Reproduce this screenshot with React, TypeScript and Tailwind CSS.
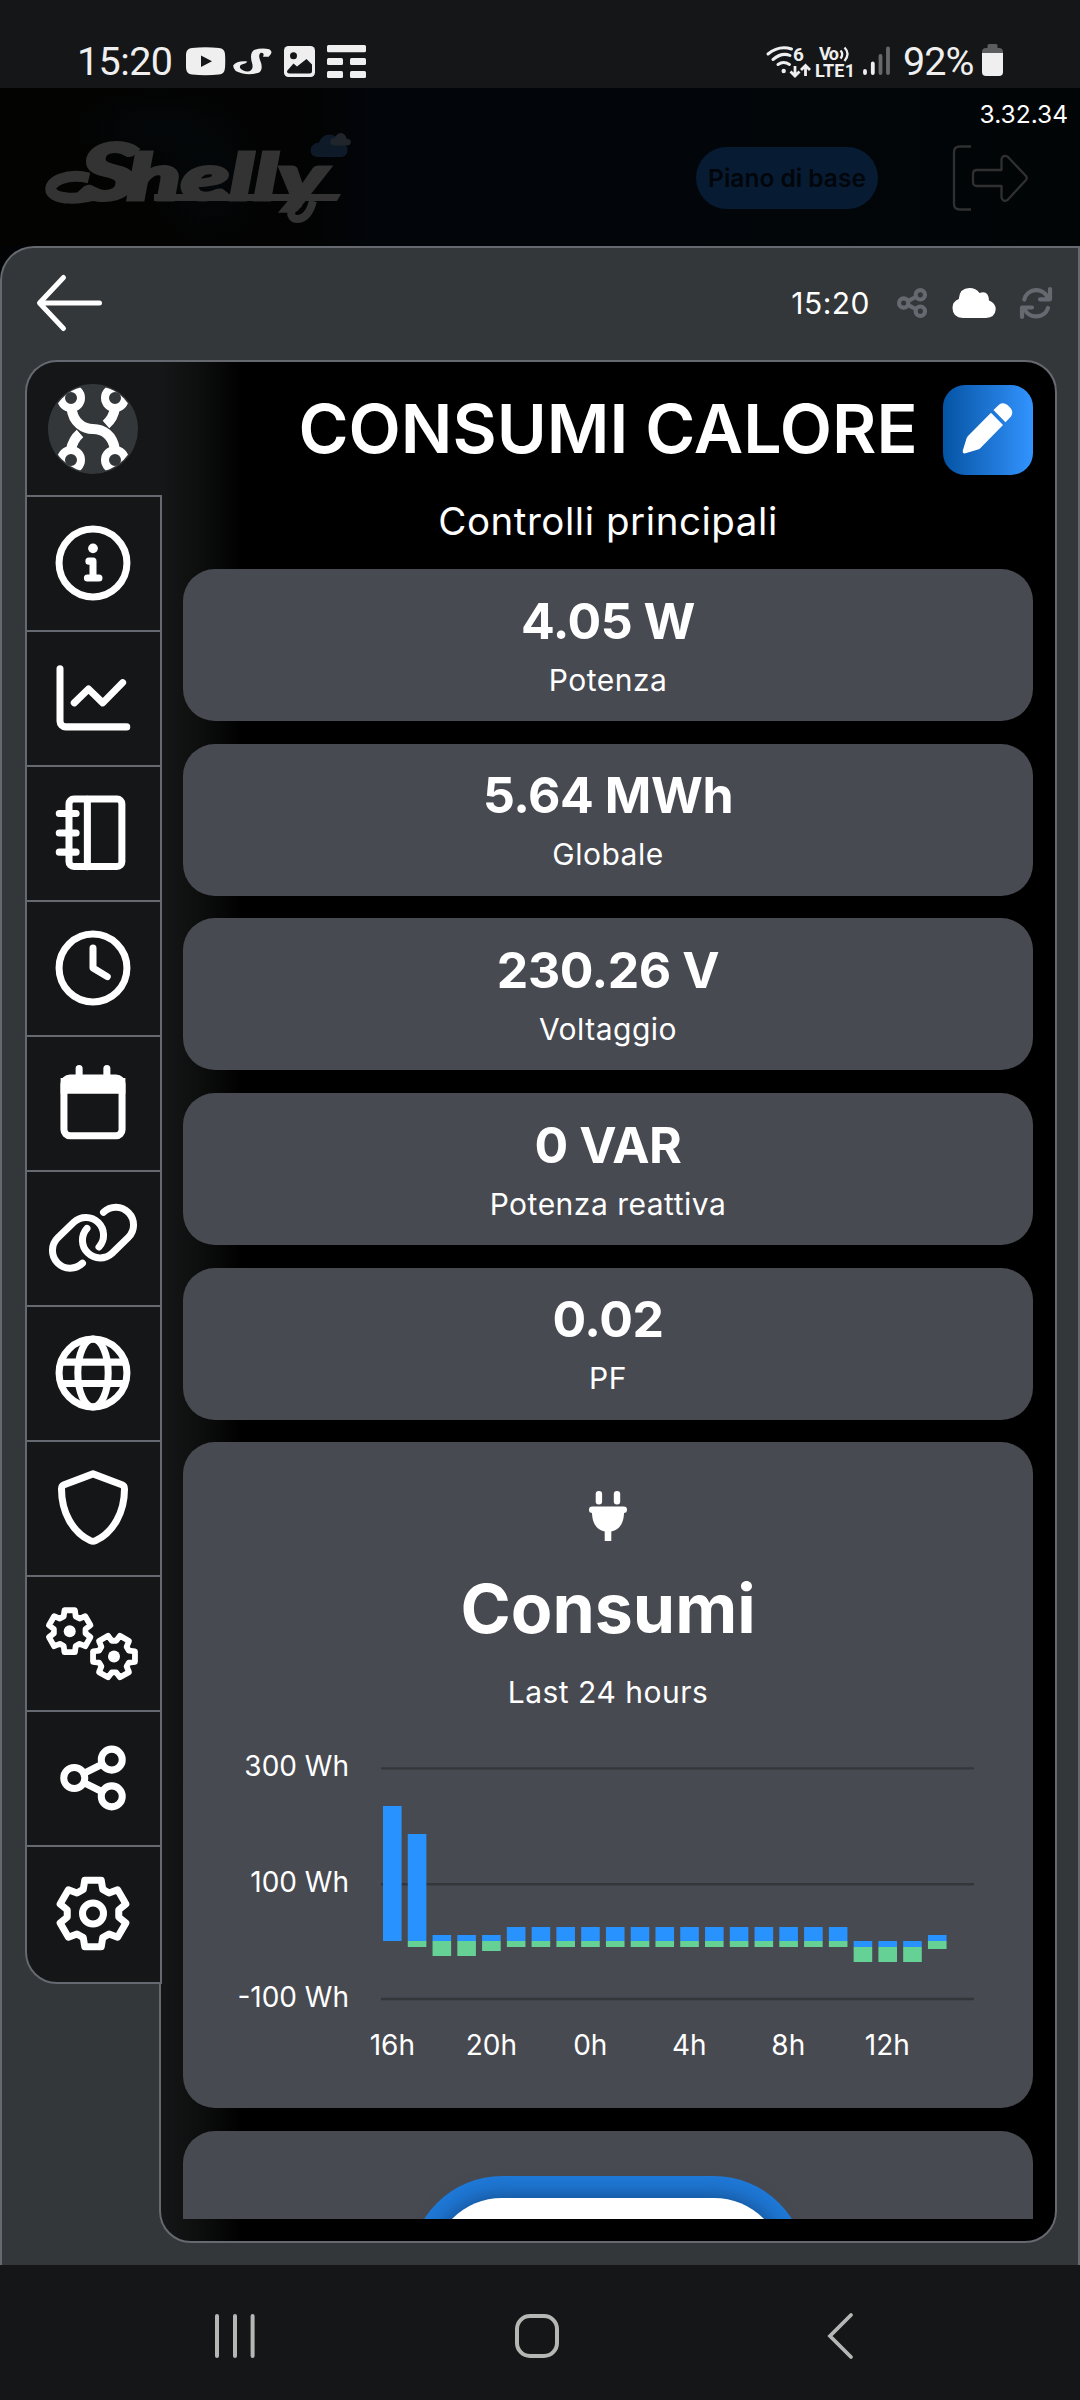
import React from "react";

const ink = "#eeefee";

function gearPath(cx: number, cy: number, outer: number, inner: number, turn = 0) {
  const points: string[] = [];
  for (let i = 0; i < 6; i++) {
    const mid = i * 60 - 90 + turn;
    const corners: [number, number][] = [
      [inner, -22],
      [outer, -14],
      [outer, 14],
      [inner, 22],
    ];
    for (const [r, d] of corners) {
      const a = ((mid + d) * Math.PI) / 180;
      points.push(`${(cx + r * Math.cos(a)).toFixed(2)} ${(cy + r * Math.sin(a)).toFixed(2)}`);
    }
  }
  return `M${points.join("L")}Z`;
}

function Icon({ children, className = "size-[90px]" }: { children: React.ReactNode; className?: string }) {
  return (
    <svg
      viewBox="0 0 24 24"
      className={className}
      fill="none"
      stroke="currentColor"
      strokeWidth={1.87}
      strokeLinecap="round"
      strokeLinejoin="round"
    >
      {children}
    </svg>
  );
}

function ShareShapes() {
  return (
    <>
      <circle cx="7" cy="12" r="2.8" />
      <circle cx="17" cy="7.1" r="2.8" />
      <circle cx="17" cy="16.9" r="2.8" />
      <path d="M9.7 10.7L14.3 8.4M9.7 13.3l4.6 2.3" />
    </>
  );
}

const sidebarIcons: { name: string; icon: React.ReactNode }[] = [
  {
    name: "info",
    icon: (
      <Icon>
        <circle cx="12" cy="12" r="9.05" />
        <circle cx="12" cy="8.1" r="1.3" fill="currentColor" stroke="none" />
        <path d="M10.9 11.5H12V16M10.5 16H13.6" />
      </Icon>
    ),
  },
  {
    name: "chart",
    icon: (
      <Icon>
        <path d="M3.2 4.2V18.2a1.5 1.5 0 0 0 1.5 1.5H21" />
        <path d="M7 13.3L10.8 9.6 14.6 13.3 19.9 7.9" />
      </Icon>
    ),
  },
  {
    name: "notebook",
    icon: (
      <Icon>
        <rect x="5.6" y="2.95" width="14.1" height="18" rx="1.3" />
        <path d="M10.5 3V21M3 6.8H7.5M3 12H7.5M3 17.1H7.5" />
      </Icon>
    ),
  },
  {
    name: "clock",
    icon: (
      <Icon>
        <circle cx="12" cy="12" r="9.05" />
        <path d="M12 6.7V12L15.8 14.3" />
      </Icon>
    ),
  },
  {
    name: "calendar",
    icon: (
      <Icon>
        <path d="M8.3 2.8V6M15.7 2.8V6" />
        <rect x="4.25" y="5.35" width="15.5" height="15.4" rx="1.6" />
        <path d="M4.3 6.3H19.7V8.6H4.3Z" fill="currentColor" strokeLinejoin="miter" />
      </Icon>
    ),
  },
  {
    name: "link",
    icon: (
      <Icon>
        <path d="M13.6 14.4A4.71 4.71 0 0 0 6.88 7.81L2.61 11.95A4.71 4.71 0 0 0 9.2 18.7" />
        <path d="M10.4 9.44A4.71 4.71 0 0 0 17.12 16.03L21.39 11.89A4.71 4.71 0 0 0 14.8 5.14" />
      </Icon>
    ),
  },
  {
    name: "globe",
    icon: (
      <Icon>
        <circle cx="12" cy="12" r="9.05" />
        <ellipse cx="12" cy="12" rx="4.05" ry="9.05" />
        <path d="M3.8 9.1H20.2M3.8 14.8H20.2" />
      </Icon>
    ),
  },
  {
    name: "shield",
    icon: (
      <Icon>
        <path d="M12 2.9L19.7 5.8Q20.4 6.1 20.4 6.9C20.4 13 17.5 18.5 12.7 20.7Q12 21 11.3 20.7C6.5 18.5 3.6 13 3.6 6.9Q3.6 6.1 4.3 5.8Z" />
      </Icon>
    ),
  },
  {
    name: "gears",
    icon: (
      <svg viewBox="0 0 96 96" className="size-[96px]" fill="none" stroke="currentColor" strokeWidth={5.8} strokeLinejoin="round">
        <path d={gearPath(24.7, 36.2, 21.6, 16)} />
        <circle cx="24.7" cy="36.2" r="6" fill="currentColor" stroke="none" />
        <path d={gearPath(69, 61.6, 21.6, 16, 30)} />
        <circle cx="69" cy="61.6" r="6" fill="currentColor" stroke="none" />
      </svg>
    ),
  },
  {
    name: "share",
    icon: (
      <Icon>
        <ShareShapes />
      </Icon>
    ),
  },
  {
    name: "settings",
    icon: (
      <svg viewBox="0 0 90 90" className="size-[90px]" fill="none" stroke="currentColor" strokeWidth={7} strokeLinejoin="round">
        <path d={gearPath(45, 44.5, 34.2, 26)} />
        <circle cx="45" cy="44.5" r="10.5" />
      </svg>
    ),
  },
];

const readings = [
  { value: "4.05 W", label: "Potenza" },
  { value: "5.64 MWh", label: "Globale" },
  { value: "230.26 V", label: "Voltaggio" },
  { value: "0 VAR", label: "Potenza reattiva" },
  { value: "0.02", label: "PF" },
];

// Each bar: [top of blue, blue/green boundary, bottom of green]
const steady: [number, number, number] = [1927, 1941, 1947];
const offset: [number, number, number] = [1941, 1947, 1962];
const bars: [number, number, number][] = [
  [1806, 1941, 1941],
  [1834, 1941, 1947],
  [1935, 1941, 1956],
  [1935, 1941, 1956],
  [1935, 1941, 1951],
  ...Array.from({ length: 14 }, () => steady),
  offset,
  offset,
  offset,
  [1935, 1941, 1949],
];

function StatusBar() {
  return (
    <div className="flex h-[88px] items-center justify-between bg-[#151618] pt-[40px] pb-[4px] pr-[76px] pl-[77px] font-['Roboto',sans-serif] text-[#eeefee]">
      <div className="flex h-[44px] items-center">
        <span className="w-[109px] text-[39.5px] leading-[40px] tracking-[-0.6px]">15:20</span>
        <svg viewBox="186 40 182 44" className="h-[44px] w-[182px]" fill={ink}>
          <path d="M192 48Q205.500 46.500 219 48Q224.500 48.500 225 54Q225.500 61 225 68Q224.500 74 219 74.500Q205.500 76 192 74.500Q186.500 74 186 68Q185.500 61 186 54Q186.500 48.500 192 48Z" />
          <path d="M201 55.500L212 61.300L201 67Z" fill="#151618" />
          <path d="M268.700 56.700H263Q265 52.300 260.700 52.700Q258 54.700 260 60Q264 69.300 258.700 72.700Q250 75.300 241.700 73.300Q232.700 71.300 233.300 65.300Q236.700 60.700 246 61.300L247.300 61.700Q246 63.700 243.300 64Q239.300 64.700 240 68Q243.300 72 249.300 71.300Q254 69.300 252 62.700Q249.300 53.300 254 50Q261.700 47.500 269.300 49.300Q274 52 268.700 56.700Z" />
          <rect x="284" y="46" width="31" height="31" rx="4.500" />
          <circle cx="293.500" cy="55.800" r="3.500" fill="#151618" />
          <path d="M287 71L293.500 63.500L297 66.500L306.500 59L312 64.500V71Q312 73.500 309.500 73.500H289.500Q287 73.500 287 71Z" fill="#151618" />
          <rect x="327" y="45" width="39" height="7.300" rx="1.500" />
          <rect x="327" y="58" width="16" height="7" rx="1.500" />
          <rect x="350" y="58" width="16" height="7" rx="1.500" />
          <rect x="327" y="71" width="16" height="7" rx="1.500" />
          <rect x="350" y="71" width="16" height="7" rx="1.500" />
        </svg>
      </div>
      <div className="flex h-[44px] items-center">
        <svg viewBox="764 40 138 44" className="h-[44px] w-[138px]" fill="none" stroke={ink}>
          <g strokeWidth="3" strokeLinecap="round">
            <path d="M767 54Q778 45 790.500 49" />
            <path d="M772 59.500Q781 52 789 55.500" />
            <path d="M777 64.500Q782.500 60.500 788.500 64.500" />
          </g>
          <circle cx="782.700" cy="71" r="2.200" fill={ink} stroke="none" />
          <path d="M794 66V75M789.500 71.500L794 76L798.500 71.500M804.500 76V66M800 70L804.500 65.500L809 70" strokeWidth="2.800" />
          <g fill={ink} stroke="none" fontFamily="Roboto, sans-serif" fontWeight="700">
            <text x="792" y="60.500" fontSize="19">6</text>
            <text x="818" y="60" fontSize="18" textLength="20">Vo</text>
            <text x="814" y="77" fontSize="18" textLength="40">LTE1</text>
          </g>
          <path d="M839.500 50.500Q843 54 839.500 58.500M843.500 47.500Q849.500 53.500 843.500 61" strokeWidth="2.300" />
          <g strokeWidth="3.800" strokeLinecap="round">
            <path d="M864 71V73M871.800 63.500V73" />
            <path d="M879.500 56V73M887 48.500V73" stroke="#67686a" />
          </g>
        </svg>
        <span className="w-[79px] text-[39.500px] leading-[40px] tracking-[-1px]">92%</span>
        <svg viewBox="982 40 22 44" className="h-[44px] w-[22px]">
          <path d="M989 44H996Q997.500 44 997.500 45.500V48H999Q1003 48 1003 52V55H982V52Q982 48 986 48H987.500V45.500Q987.500 44 989 44Z" fill="#5c5d5e" />
          <path d="M982 53H1003V72Q1003 76 999 76H986Q982 76 982 72Z" fill={ink} />
        </svg>
      </div>
    </div>
  );
}

function AppHeader() {
  return (
    <div className="relative h-[158px] bg-[radial-gradient(ellipse_60px_70px_at_210px_90px,#04080b,transparent),radial-gradient(ellipse_90px_40px_at_160px_40px,#04070a,transparent),linear-gradient(90deg,#030302_0px,#020302_300px,#02050a_380px,#020609_800px,#020506_1080px)]">
      <div className="absolute top-[12px] right-[12px] text-[24.500px] leading-[28px] text-white">3.32.34</div>
      <div className="flex h-full items-center justify-between pr-[50px] pl-[40px]">
        <svg viewBox="40 125 320 105" className="mt-[21px] h-[105px] w-[320px] overflow-visible">
          <path
            d="M89 178C68 173 48 181 51 191C56 200 78 200 98 194"
            fill="none"
            stroke="#333333"
            strokeWidth="11"
          />
          <g fill="#333333" stroke="#333333" strokeWidth="3" fontFamily="Lato, sans-serif" fontStyle="italic" fontWeight="900">
            <text x="80" y="199.500" fontSize="78" textLength="58" lengthAdjust="spacingAndGlyphs">
              S
            </text>
            <text x="127" y="199.500" fontSize="64" textLength="200" lengthAdjust="spacingAndGlyphs">
              helly
            </text>
          </g>
          <path d="M154 194H341L337 201H154Z" fill="#333333" />
          <path d="M313 201C309 216 303 219 297 219C289 219 288 206 301 203" fill="none" stroke="#333333" strokeWidth="8" />
          <path d="M317 157Q310.500 156 310.500 150Q311 143.500 319 142.500Q322 134.500 329.500 134.500Q338 135 340 142.500Q348 144 347.500 150.500Q347 157 341 157Z" fill="#0e1a28" />
          <path d="M334 145.500Q330 145 330 141.500Q330.500 138 335 137.500Q337 133 341 133Q345.500 133.500 346.500 138.500Q351 139 351 142Q350.500 145.500 347 145.500Z" fill="#20242b" />
        </svg>
        <div className="mt-[22px] flex items-center">
          <div className="flex h-[62px] w-[182px] items-center justify-center rounded-full bg-[#071b33] text-[24.500px] font-semibold whitespace-nowrap text-[#02060b]">
            Piano di base
          </div>
          <svg viewBox="951 143 79 68" className="ml-[73px] h-[68px] w-[79px]" fill="none" stroke="#303030" strokeWidth="2.300" strokeLinejoin="round">
            <path d="M971 145.500H960Q954 145.500 954 151V203Q954 208.500 960 208.500H971" />
            <path d="M977 169H1001.500V158Q1003 153.500 1007.500 155.500L1026 175Q1027.500 177 1026 179L1007.500 199Q1003 201.500 1001.500 196.500V185H977Q973 185 973 181V173Q973 169 977 169Z" />
          </svg>
        </div>
      </div>
    </div>
  );
}

function ModalBar() {
  return (
    <div className="flex h-[112px] items-center justify-between pr-[24px] pb-[2px] pl-[34px] text-white">
      <svg viewBox="36 273 68 60" className="h-[60px] w-[68px]" fill="none" stroke="currentColor" strokeWidth="5" strokeLinecap="round" strokeLinejoin="round">
        <path d="M63.500 277.500L39.500 303L63.500 328.500M40 303H99.500" />
      </svg>
      <div className="flex items-center">
        <span className="text-[30px] leading-[40px] tracking-[0.500px]">15:20</span>
        <Icon className="ml-[22px] size-[40px] stroke-[2.500] text-[#666970]">
          <ShareShapes />
        </Icon>
        <svg viewBox="952 287 45 32" className="ml-[20px] h-[32px] w-[45px]" fill="currentColor">
          <path d="M963 318Q952.500 317.500 952.500 308Q952.500 301.500 958.800 299Q959.500 288 969.500 288Q976 288 979.500 293Q988.500 290 989 300.500Q995.700 303 995.700 309.500Q995 317.500 986 318Z" />
        </svg>
        <svg
          viewBox="1018 285 36 36"
          className="ml-[21px] size-[36px] text-[#666970]"
          fill="none"
          stroke="currentColor"
          strokeWidth="4.200"
          strokeLinecap="round"
          strokeLinejoin="round"
        >
          <path d="M1050 289V299.300H1040M1022 317V307.500H1032" />
          <path d="M1024.300 299.500C1027 288 1043 286.500 1048 298M1048 308C1045 318.500 1029 319.500 1024.500 309" />
        </svg>
      </div>
    </div>
  );
}

function DeviceBadge() {
  return (
    <svg viewBox="48 384 90 90" className="size-[90px]">
      <defs>
        <clipPath id="badge">
          <circle cx="93" cy="429" r="43.500" />
        </clipPath>
      </defs>
      <circle cx="93" cy="429" r="45" fill="#33373a" />
      <g clipPath="url(#badge)">
        <g fill="none" stroke="#fff" strokeWidth="10">
          <path d="M71.500 408C73 423 84 429 93 429C103 429 113 435 115 450" />
          <path d="M115 408Q113.500 418 106 424.500M71 450Q72.500 440 80 433.500" />
        </g>
        {[
          [71, 398],
          [115, 398],
          [71, 460],
          [115, 460],
        ].map(([x, y]) => (
          <circle key={`${x}-${y}`} cx={x} cy={y} r="10" fill="#33373a" stroke="#fff" strokeWidth="8" />
        ))}
      </g>
    </svg>
  );
}

function Sidebar() {
  return (
    <div className="relative z-10 w-[137px] shrink-0 text-white">
      <div className="flex h-[135px] items-center rounded-tl-[32px] border-t-2 border-l-2 border-[#666970] bg-[#151618] pl-[21px]">
        <DeviceBadge />
      </div>
      {sidebarIcons.map(({ name, icon }, i) => (
        <div
          key={name}
          className={
            "flex items-center justify-center border-x-2 border-t-2 border-[#666970] bg-[#151618] pr-[1px] pb-[1px] " +
            (i === sidebarIcons.length - 1 ? "h-[139px] rounded-bl-[32px] border-b-2" : "h-[135px]")
          }
        >
          {icon}
        </div>
      ))}
    </div>
  );
}

function ConsumptionChart() {
  return (
    <svg viewBox="183 1740 850 330" className="mt-[28px] h-[330px] w-[850px]" fontSize="28" fill="#fff">
      {[1768.400, 1884.300, 1999].map((y) => (
        <path key={y} d={`M381 ${y}H974`} stroke="#33373a" strokeWidth="2.400" />
      ))}
      {bars.map(([top, mid, bottom], i) => (
        <g key={i}>
          <rect x={383 + i * 24.77} y={top} width="18.600" height={mid - top} fill="#2892ff" />
          <rect x={383 + i * 24.77} y={mid} width="18.600" height={bottom - mid} fill="#65d195" />
        </g>
      ))}
      <g textAnchor="end">
        <text x="349" y="1776">300 Wh</text>
        <text x="349" y="1892">100 Wh</text>
        <text x="349" y="2007">-100 Wh</text>
      </g>
      <g textAnchor="middle">
        {["16h", "20h", "0h", "4h", "8h", "12h"].map((t, i) => (
          <text key={t} x={392.300 + i * 99} y="2054.500">
            {t}
          </text>
        ))}
      </g>
    </svg>
  );
}

function MainPanel() {
  return (
    <div className="relative ml-[-3px] h-[1883px] w-[898px] overflow-hidden rounded-r-[32px] rounded-bl-[32px] border-2 border-[#666970] bg-[linear-gradient(90deg,#151618_0px,#0e100f_34px,#000_82px)] px-[22px] pt-[23px] text-center text-white">
      <div className="relative">
        <h1 className="text-[68px] leading-[86px] font-semibold whitespace-nowrap">CONSUMI CALORE</h1>
        <div className="absolute top-0 right-0 flex size-[90px] items-center justify-center rounded-[22px] bg-linear-to-r from-[#0454a4] to-[#3294ff]">
          <svg viewBox="943 385 90 90" className="size-[90px]" fill="currentColor">
            <path d="M991 412.700L1003 425L980.500 448Q979.500 449 978 449.500L965.500 453.300Q962.300 454 962.800 450.500L966.500 438.500Q967 437 968 436Z" />
            <path d="M993.500 410L999 404.800Q1003 401.800 1007.500 405L1010.500 408Q1014 412.500 1011 416.500L1005.500 422.300Z" />
          </svg>
        </div>
      </div>
      <div className="mt-[28px] text-[38.500px] leading-[44px] tracking-[0.550px]">Controlli principali</div>
      <div className="mt-[26px] flex h-[1650px] flex-col gap-[22.700px] overflow-hidden">
        {readings.map(({ value, label }) => (
          <div key={label} className="h-[152px] shrink-0 rounded-[32px] bg-[#484a52] pt-[21.500px]">
            <div className="text-[50px] leading-[60px] font-bold tracking-[-0.450px]">{value}</div>
            <div className="mt-[9px] text-[30px] leading-[40px] tracking-[0.500px]">{label}</div>
          </div>
        ))}
        <div className="flex h-[666px] shrink-0 flex-col items-center rounded-[32px] bg-[#484a52] pt-[49px]">
          <svg viewBox="588 1491 40 50" className="h-[50px] w-[40px] shrink-0" fill="currentColor">
            <rect x="595.700" y="1491" width="6.400" height="13.500" rx="3" />
            <rect x="613.800" y="1491" width="6.400" height="13.500" rx="3" />
            <rect x="589" y="1506.500" width="38" height="6.500" rx="3.200" />
            <path d="M592 1510H624V1514Q623 1529 611.300 1531.500V1541H604.700V1531.500Q593 1529 592 1514Z" />
          </svg>
          <div className="mt-[25px] text-[68px] leading-[84px] font-bold">Consumi</div>
          <div className="mt-[22px] text-[30px] leading-[40px] tracking-[0.500px]">Last 24 hours</div>
          <ConsumptionChart />
        </div>
        <div className="flex h-[500px] shrink-0 justify-center rounded-[32px] bg-[#484a52] pt-[45px]">
          <div className="flex h-[396px] w-[396px] rounded-[92px] bg-[#1f7ad9] p-[22px]">
            <div className="h-full w-full rounded-[70px] bg-white shadow-[0_0_24px_rgba(10,30,60,0.6)]" />
          </div>
        </div>
      </div>
    </div>
  );
}

function NavBar() {
  return (
    <div className="flex h-[135px] items-center justify-between bg-[#151618] pr-[225px] pl-[213px]">
      <svg viewBox="213 2312 44 48" className="mt-[7px] h-[48px] w-[44px]" stroke="#b5b7b5" strokeWidth="4" strokeLinecap="round">
        <path d="M217 2316V2356M235 2316V2356M252.600 2316V2356" />
      </svg>
      <svg viewBox="513 2312 48 48" className="mt-[7px] mr-[8px] size-[48px]" fill="none" stroke="#b5b7b5" strokeWidth="4">
        <rect x="517" y="2316" width="40" height="40" rx="13" />
      </svg>
      <svg viewBox="825 2311 30 50" className="mt-[7px] h-[50px] w-[30px]" fill="none" stroke="#b5b7b5" strokeWidth="3.800" strokeLinecap="round">
        <path d="M851 2315L830 2336L851 2357" />
      </svg>
    </div>
  );
}

export default function App() {
  return (
    <div className="h-[2400px] w-[1080px] overflow-hidden bg-[#020304] font-['Inter',sans-serif]">
      <StatusBar />
      <AppHeader />
      <div className="h-[2019px] rounded-tl-[34px] border-x-2 border-t-2 border-[#666970] bg-[#33373a]">
        <ModalBar />
        <div className="flex items-start pl-[23px]">
          <Sidebar />
          <MainPanel />
        </div>
      </div>
      <NavBar />
    </div>
  );
}
